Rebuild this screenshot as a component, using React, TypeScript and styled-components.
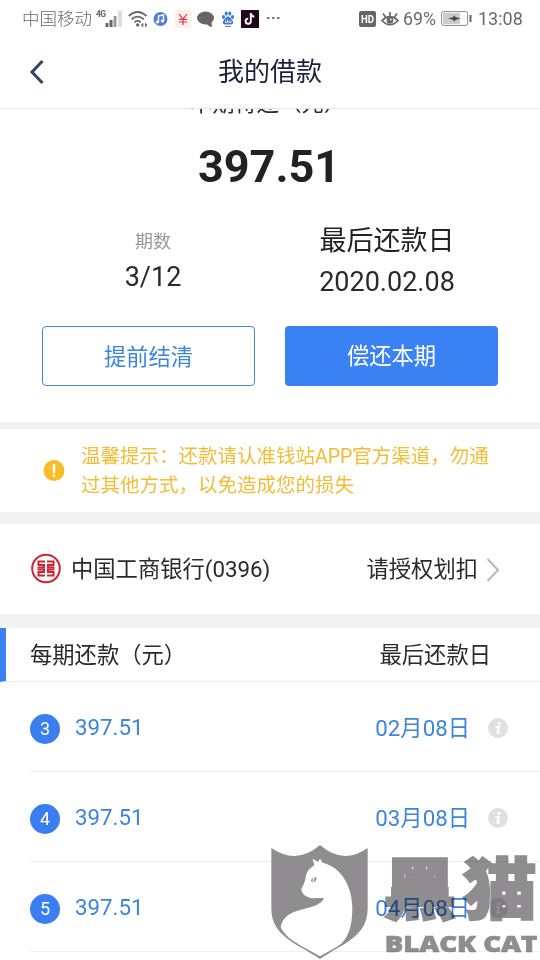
import styled, { createGlobalStyle } from 'styled-components'

const GlobalStyle = createGlobalStyle`
  * {
    box-sizing: border-box;
  }

  body {
    margin: 0;
    background: #fff;
    font-family: Roboto, 'Noto Sans CJK SC', sans-serif;
  }
`

const Page = styled.div`
  position: relative;
  width: 540px;
  height: 960px;
  overflow: hidden;
  background: #fff;
  color: #2a2a2a;
`

const StatusBar = styled.div`
  display: flex;
  align-items: center;
  justify-content: space-between;
  height: 37px;
  padding: 0 18px 0 22px;
  color: #6a6a6a;
  font-size: 17.5px;
  line-height: 37px;
`

const StatusGroup = styled.div`
  display: flex;
  align-items: center;
`

const Carrier = styled.span`
  width: 74px;
  padding-top: 2px;
  font-weight: 300;
`

const StatusText = styled.span<{ $width: number; $size: number }>`
  width: ${(p) => p.$width}px;
  font-size: ${(p) => p.$size}px;
`

const StatusIcon = styled.svg<{ $gap?: number }>`
  display: block;
  flex: none;
  margin-right: ${(p) => p.$gap || 0}px;
`

const Header = styled.header`
  display: grid;
  grid-template-columns: 80px 1fr 80px;
  align-items: center;
  height: 72px;
  padding-bottom: 1px;
  border-bottom: 1px solid #e6e6e6;
`

const BackButton = styled.button`
  display: flex;
  padding: 0 0 0 29px;
  border: 0;
  background: none;
`

const Title = styled.h1`
  margin: 0;
  color: #1a2138;
  font-size: 26px;
  font-weight: 400;
  line-height: 36px;
  text-align: center;
`

const Summary = styled.section`
  height: 313px;
  overflow: hidden;
`

const SummaryLabel = styled.div`
  height: 24px;
  margin-top: -18px;
  padding-right: 4px;
  font-size: 22.3px;
  line-height: 24px;
  text-align: center;
`

const Amount = styled.div`
  height: 54px;
  margin-top: 25px;
  padding-right: 2px;
  color: #222;
  font-size: 45px;
  font-weight: 700;
  line-height: 54px;
  text-align: center;
`

const Facts = styled.div`
  display: grid;
  grid-template-columns: 222px 1fr;
  height: 132px;
  padding: 29px 42px 0;
`

const Fact = styled.div<{ $large?: boolean }>`
  display: flex;
  flex-direction: column;
  align-items: center;
  gap: ${(p) => (p.$large ? 4 : 0)}px;
  padding: ${(p) => (p.$large ? '0 0 0 12px' : '3px 0 0')};
`

const FactLabel = styled.div<{ $large?: boolean }>`
  color: ${(p) => (p.$large ? '#222' : '#999')};
  font-size: ${(p) => (p.$large ? 27 : 18)}px;
  line-height: ${(p) => (p.$large ? 36 : 32)}px;
`

const FactValue = styled.div`
  color: #2a2a2a;
  font-size: 27px;
  line-height: 38px;
`

const Actions = styled.div`
  display: grid;
  grid-template-columns: 1fr 1fr;
  gap: 30px;
  padding: 0 42px;
`

const Button = styled.button<{ $primary?: boolean }>`
  height: 60px;
  padding: ${(p) => (p.$primary ? '0 0 4px' : '0 0 2px')};
  border: ${(p) => (p.$primary ? '0' : '1.5px solid #4488de')};
  border-radius: 4px;
  background: ${(p) => (p.$primary ? '#3a82f3' : '#fff')};
  color: ${(p) => (p.$primary ? '#fff' : '#3d85dc')};
  font-family: inherit;
  font-size: 22.3px;
`

const Divider = styled.div<{ $height: number }>`
  height: ${(p) => p.$height}px;
  background: #f2f2f2;
`

const Notice = styled.section`
  display: flex;
  align-items: center;
  height: 83px;
  padding-left: 43px;
  color: #f2bd35;
`

const NoticeText = styled.p`
  width: 420px;
  margin: 1px 0 0 16px;
  font-size: 19.5px;
  line-height: 29px;
`

const BankRow = styled.section`
  display: flex;
  align-items: center;
  height: 90px;
  padding: 0 40px 0 31px;
  font-size: 22.3px;
`

const BankName = styled.span`
  flex: 1;
  margin-left: 10px;
  padding-bottom: 5px;
`

const BankAction = styled.span`
  margin-right: 8px;
  padding-bottom: 5px;
`

const TableHead = styled.div`
  display: flex;
  align-items: center;
  justify-content: space-between;
  height: 54px;
  padding: 0 49px 3px 24px;
  border-left: 6px solid #3a82f3;
  border-bottom: 1px solid #ececec;
  font-size: 22.3px;
`

const Row = styled.div`
  display: flex;
  align-items: center;
  height: 90px;
  margin-left: 30px;
  padding: 2px 32px 0 0;
  border-bottom: 1px solid #f0f0f0;
  color: #3d85dc;
  font-size: 22.3px;
`

const Period = styled.span`
  width: 30px;
  height: 30px;
  margin-top: 3px;
  border-radius: 50%;
  background: #3a7ff2;
  color: #fff;
  font-size: 18px;
  line-height: 30px;
  text-align: center;
`

const RowAmount = styled.span`
  flex: 1;
  margin-left: 15px;
  padding-bottom: 1px;
`

const RowDate = styled.span`
  margin-right: 18px;
  padding-bottom: 3px;
`

const Watermark = styled.svg<{ $blend?: boolean }>`
  position: absolute;
  left: 260px;
  top: 840px;
  mix-blend-mode: ${(p) => (p.$blend ? 'multiply' : 'normal')};
`

const periods = [
  { no: 3, amount: '397.51', date: '02月08日' },
  { no: 4, amount: '397.51', date: '03月08日' },
  { no: 5, amount: '397.51', date: '04月08日' },
]

const SignalIcon = () => (
  <StatusIcon $gap={5} width="27" height="20" viewBox="0 0 27 20">
    <text x="0" y="8" fontSize="8.5" fontWeight="700" fill="#666" textLength="10">
      4G
    </text>
    <path d="M9.5 14h3v4h-3zM13.5 11h3v7h-3z" fill="#666" />
    <path d="M17.5 7h3v11h-3z" fill="#999" />
    <path d="M22 2h4v16h-4z" fill="#ddd" />
  </StatusIcon>
)

const WifiIcon = () => (
  <StatusIcon $gap={5} width="20" height="18" viewBox="0 0 20 18">
    <g fill="none" stroke="#666" strokeWidth="1.8">
      <path d="M.8 6Q9.5-2 18.5 6" />
      <path d="M3.6 9.2Q9.5 4 15.8 9.2" />
      <path d="M6.5 12.3Q9.5 9.5 12.8 12.3" />
    </g>
    <circle cx="9.7" cy="15" r="1.7" fill="#666" />
    <path d="M13 15l2.3-2.5v5zM19.3 15L17 12.5v5z" fill="#666" />
  </StatusIcon>
)

const MusicIcon = () => (
  <StatusIcon $gap={7} width="15" height="16" viewBox="0 0 15 16">
    <circle cx="7.5" cy="8" r="7" fill="#587fd4" />
    <path d="M5.5 11V5l5-1.2V10" fill="none" stroke="#fff" strokeWidth="1.4" />
    <ellipse cx="4.5" cy="11" rx="1.7" ry="1.4" fill="#fff" />
    <ellipse cx="9.5" cy="10" rx="1.7" ry="1.4" fill="#fff" />
  </StatusIcon>
)

const YenIcon = () => (
  <StatusIcon $gap={6} width="16" height="18" viewBox="0 0 16 18">
    <rect width="16" height="18" rx="2" fill="#fdf0ec" />
    <path
      d="M4 4l4 5 4-5M8 9v6M4 9.3h8M4 12h8"
      fill="none"
      stroke="#e2314d"
      strokeWidth="1.2"
    />
  </StatusIcon>
)

const ChatIcon = () => (
  <StatusIcon $gap={8} width="17" height="16" viewBox="0 0 17 16">
    <ellipse cx="8.5" cy="7" rx="8.5" ry="6.5" fill="#666" />
    <path d="M9 12l5.5-1 .5 5q-4-.5-6-4z" fill="#666" />
  </StatusIcon>
)

const PawIcon = () => (
  <StatusIcon $gap={7} width="12" height="18" viewBox="0 0 12 18">
    <g fill="#3978d8">
      <ellipse cx="1.5" cy="7" rx="1.5" ry="2" />
      <ellipse cx="4.2" cy="3.6" rx="1.5" ry="2.1" />
      <ellipse cx="7.8" cy="3.6" rx="1.5" ry="2.1" />
      <ellipse cx="10.5" cy="7" rx="1.5" ry="2" />
      <path d="M6 6.5C8 6.5 8.5 8.5 10.5 10.5C12 13 10.5 14.5 8.5 14.5H3.5C1.5 14.5 0 13 1.5 10.5C3.5 8.5 4 6.5 6 6.5z" />
    </g>
    <path d="M3.5 10.5v2h2v-3M7 10.5v2h2v-2" fill="none" stroke="#fff" strokeWidth=".8" />
    <path d="M3 16.5h6" stroke="#c66" />
  </StatusIcon>
)

const TiktokIcon = () => (
  <StatusIcon $gap={8} width="18" height="18" viewBox="0 0 18 18">
    <rect width="18" height="18" fill="#22061c" />
    <path
      d="M9.8 3v8.2a2.6 2.6 0 1 1-2.6-2.6M9.8 3.5q.7 3 3.5 3.2"
      fill="none"
      stroke="#fff"
      strokeWidth="1.9"
    />
  </StatusIcon>
)

const MoreIcon = () => (
  <StatusIcon width="13" height="4" viewBox="0 0 13 4">
    <path d="M0 0h2.500v2H0zM5 0h2.500v2H5zM10 0h2.500v2H10z" fill="#777" />
  </StatusIcon>
)

const HdIcon = () => (
  <StatusIcon $gap={5} width="17" height="16" viewBox="0 0 17 16">
    <rect width="17" height="16" rx="2" fill="#666" />
    <text
      x="2"
      y="12"
      fontSize="10.5"
      fontWeight="700"
      fill="#fff"
      textLength="13"
      lengthAdjust="spacingAndGlyphs"
    >
      HD
    </text>
  </StatusIcon>
)

const EyeIcon = () => (
  <StatusIcon $gap={4} width="18" height="16" viewBox="0 0 18 16">
    <path
      d="M1 9.5Q9 2 17 9.500Q9 18 1 9.500zM9 5V1M4.500 6L2 2.500M13.500 6L16 2.500"
      fill="none"
      stroke="#666"
      strokeWidth="1.7"
    />
    <circle cx="9" cy="9.5" r="3.3" fill="#666" />
    <circle cx="9.8" cy="8.5" r=".9" fill="#fff" />
  </StatusIcon>
)

const BatteryIcon = () => (
  <StatusIcon $gap={6} width="31" height="15" viewBox="0 0 31 15">
    <rect x="2" y="2" width="17" height="11" fill="#ccc" />
    <rect x=".6" y=".6" width="26" height="13.8" rx="2" fill="none" stroke="#888" />
    <path d="M28.500 4h2v7h-2z" fill="#666" />
    <path d="M7 7.500l5-1.200 1.200-2 1.500 2 5 1.200-5 1.200-1.500 2-1.200-2z" fill="#444" />
  </StatusIcon>
)

const BackIcon = () => (
  <svg width="18" height="26" viewBox="0 0 18 26">
    <path d="M13.500 2L3 13l10.500 11" fill="none" stroke="#354366" strokeWidth="3" />
  </svg>
)

const AlertIcon = () => (
  <svg width="22" height="22" viewBox="0 0 22 22">
    <circle cx="11" cy="10.500" r="10.500" fill="#f6bd27" />
    <path d="M11 5v7" stroke="#fff" strokeWidth="2.600" strokeLinecap="round" />
    <circle cx="11" cy="15.700" r="1.400" fill="#fff" />
  </svg>
)

const BankLogo = () => (
  <svg width="30" height="32" viewBox="0 0 30 32">
    <circle cx="15" cy="15.500" r="13.800" fill="none" stroke="#cf2434" strokeWidth="2" />
    <g fill="none" stroke="#cf2434" strokeWidth="2">
      <path d="M14 8.500H7.500V12H13v2.500H6.500M16 8.500h6.500V12H17v2.500h6.500" />
      <path d="M14 22.500H7.500V19H13v-2.500H6.500M16 22.500h6.500V19H17v-2.500h6.500" />
    </g>
  </svg>
)

const ArrowIcon = () => (
  <svg width="14" height="26" viewBox="0 0 14 26">
    <path d="M1.500 3L12 14 1.500 25" fill="none" stroke="#b8b8b8" strokeWidth="2" />
  </svg>
)

const InfoIcon = () => (
  <svg width="20" height="20" viewBox="0 0 20 20">
    <circle cx="10" cy="10" r="10" fill="#e0e0e0" />
    <circle cx="11" cy="5.500" r="1.700" fill="#fff" />
    <path d="M7.500 9h3.500L9.300 14.500q0 1 2.700-.5" fill="none" stroke="#fff" strokeWidth="2" />
  </svg>
)

export default function App() {
  return (
    <Page>
      <GlobalStyle />
      <StatusBar>
        <StatusGroup>
          <Carrier>中国移动</Carrier>
          <SignalIcon />
          <WifiIcon />
          <MusicIcon />
          <YenIcon />
          <ChatIcon />
          <PawIcon />
          <TiktokIcon />
          <MoreIcon />
        </StatusGroup>
        <StatusGroup>
          <HdIcon />
          <EyeIcon />
          <StatusText $width={38} $size={17.8}>
            69%
          </StatusText>
          <BatteryIcon />
          <StatusText $width={44} $size={18}>
            13:08
          </StatusText>
        </StatusGroup>
      </StatusBar>

      <Header>
        <BackButton>
          <BackIcon />
        </BackButton>
        <Title>我的借款</Title>
      </Header>

      <Summary>
        <SummaryLabel>本期待还（元）</SummaryLabel>
        <Amount>397.51</Amount>
        <Facts>
          <Fact>
            <FactLabel>期数</FactLabel>
            <FactValue>3/12</FactValue>
          </Fact>
          <Fact $large>
            <FactLabel $large>最后还款日</FactLabel>
            <FactValue>2020.02.08</FactValue>
          </Fact>
        </Facts>
        <Actions>
          <Button>提前结清</Button>
          <Button $primary>偿还本期</Button>
        </Actions>
      </Summary>

      <Divider $height={7} />
      <Notice>
        <AlertIcon />
        <NoticeText>
          温馨提示：还款请认准钱站APP官方渠道，勿通
          <br />
          过其他方式，以免造成您的损失
        </NoticeText>
      </Notice>
      <Divider $height={12} />
      <BankRow>
        <BankLogo />
        <BankName>中国工商银行(0396)</BankName>
        <BankAction>请授权划扣</BankAction>
        <ArrowIcon />
      </BankRow>
      <Divider $height={14} />

      <TableHead>
        <span>每期还款（元）</span>
        <span>最后还款日</span>
      </TableHead>
      {periods.map((p) => (
        <Row key={p.no}>
          <Period>{p.no}</Period>
          <RowAmount>{p.amount}</RowAmount>
          <RowDate>{p.date}</RowDate>
          <InfoIcon />
        </Row>
      ))}

      <Watermark width="280" height="120" viewBox="0 0 840 360">
        <path
          d="M34 24Q110 76 180 15Q250 76 323 24V205C323 290 250 310 180 357C110 310 34 290 34 205z"
          fill="#8f8d8f"
        />
        <path
          d="M158 56L174 66 180 56 188 68C245 82 277 140 277 205C277 262 262 300 236 317L180 349C130 320 80 300 62 262C72 210 130 212 168 196Q186 188 192 175C172 172 158 178 146 172C134 168 124 158 124 146C132 134 136 122 138 106C142 92 152 82 163 76z"
          fill="#fff"
        />
        <path d="M152 122q6-12 18-10q0 14-12 15z" fill="#8f8d8f" />
        <path d="M162 113l-3 12" stroke="#fff" strokeWidth="4" />
      </Watermark>
      <Watermark $blend width="280" height="120" viewBox="0 0 840 360" fill="#8f8d8f">
        <text
          x="335 553"
          y="223"
          transform="scale(1.1 1)"
          fontFamily="Noto Sans CJK SC"
          fontSize="202"
          fontWeight="900"
          stroke="#8f8d8f"
          strokeWidth="6"
        >
          黑猫
        </text>
        <text
          x="374"
          y="337"
          fontFamily="Open Sans"
          fontSize="68"
          fontWeight="800"
          textLength="458"
          lengthAdjust="spacingAndGlyphs"
          stroke="#8f8d8f"
          strokeWidth="2"
        >
          BLACK CAT
        </text>
      </Watermark>
    </Page>
  )
}
